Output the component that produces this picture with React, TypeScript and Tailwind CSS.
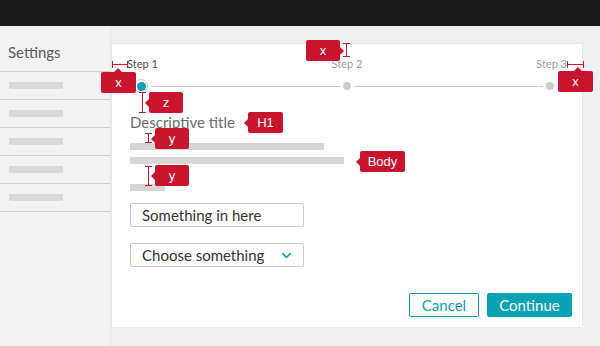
import { ChevronDown } from "lucide-react";

// red annotation tag with a little notch pointing at what it measures
function Tag({
  x,
  y,
  w,
  label,
  notch,
  at = 0,
}: {
  x: number;
  y: number;
  w: number;
  label: string;
  notch: "up" | "left" | "right";
  at?: number;
}) {
  return (
    <div
      className="absolute flex h-[21px] items-center justify-center rounded-[2px] bg-[#c8142c] text-[13px] text-white [font-family:'Liberation_Sans',sans-serif]"
      style={{ left: x, top: y, width: w }}
    >
      {notch === "up" && (
        <span
          className="absolute -top-[4px] h-0 w-0 border-x-[5px] border-b-[5px] border-x-transparent border-b-[#c8142c]"
          style={{ left: at - 5 }}
        />
      )}
      {notch === "left" && (
        <span className="absolute top-[6px] -left-[4px] h-0 w-0 border-y-[5px] border-r-[5px] border-y-transparent border-r-[#c8142c]" />
      )}
      {notch === "right" && (
        <span className="absolute top-[6px] -right-[4px] h-0 w-0 border-y-[5px] border-l-[5px] border-y-transparent border-l-[#c8142c]" />
      )}
      {label}
    </div>
  );
}

// measuring bar with end caps
function Beam({
  x,
  y,
  len,
  vertical,
}: {
  x: number;
  y: number;
  len: number;
  vertical?: boolean;
}) {
  if (vertical) {
    return (
      <div
        className="absolute flex w-[7px] flex-col items-center justify-between"
        style={{ left: x - 3, top: y, height: len }}
      >
        <span className="h-px w-[7px] bg-[#c8142c]" />
        <span className="w-px flex-1 bg-[#c8142c]" />
        <span className="h-px w-[7px] bg-[#c8142c]" />
      </div>
    );
  }
  return (
    <div
      className="absolute flex h-[7px] items-center justify-between"
      style={{ left: x, top: y - 3, width: len }}
    >
      <span className="h-[7px] w-px bg-[#c8142c]" />
      <span className="h-px flex-1 bg-[#c8142c]" />
      <span className="h-[7px] w-px bg-[#c8142c]" />
    </div>
  );
}

export default function App() {
  const rows = [0, 1, 2, 3, 4];

  return (
    <div className="relative flex h-[346px] w-[600px] flex-col overflow-hidden bg-[#f0f0f0] [font-family:Lato,'Open_Sans',sans-serif]">
      {/* top bar */}
      <div className="h-[26px] shrink-0 bg-[#1a1a1a]" />

      <div className="flex flex-1">
        {/* sidebar */}
        <aside className="w-[111px] shrink-0 border-r border-[#e6e6e6] bg-[#f2f2f2]">
          <div className="h-[46px] border-b border-[#d0d0d0] pt-[19px] pl-[8px] text-[15px] leading-none text-[#5a5a5a]">
            Settings
          </div>
          {rows.map((r) => (
            <div
              key={r}
              className="h-[28px] border-b border-[#d0d0d0] pt-[10px] pl-[9px]"
            >
              <div className="h-[7px] w-[54px] bg-[#d9d9d9]" />
            </div>
          ))}
        </aside>

        {/* content */}
        <main className="flex-1 pt-[17px] pr-[17px] pb-[18px]">
          <div className="flex h-full flex-col border border-[#e8e8e8] bg-white">
            {/* stepper */}
            <div className="flex justify-between px-[15px] pt-[14px] text-[11px] leading-none">
              <span className="text-[#4a4a4a]">Step 1</span>
              <span className="text-[#9a9a9a]">Step 2</span>
              <span className="text-[#9a9a9a]">Step 3</span>
            </div>
            <div className="mt-[10px] flex items-center pr-[28px] pl-[22px]">
              <div className="flex h-[14px] w-[14px] items-center justify-center rounded-full border border-[#cfcfcf]">
                <div className="h-[9px] w-[9px] rounded-full bg-[#07a2b3]" />
              </div>
              <div className="mx-[3px] h-px flex-1 bg-[#cccccc]" />
              <div className="h-[8px] w-[8px] rounded-full bg-[#cccccc]" />
              <div className="mx-[3px] h-px flex-1 bg-[#cccccc]" />
              <div className="h-[8px] w-[8px] rounded-full bg-[#cccccc]" />
            </div>

            {/* body */}
            <div className="flex flex-col pl-[18px]">
              <h1 className="mt-[22px] text-[15px] leading-none text-[#6a6a6a]">
                Descriptive title
              </h1>
              <div className="mt-[13px] h-[7px] w-[194px] bg-[#d6d6d6]" />
              <div className="mt-[7px] h-[7px] w-[214px] bg-[#d6d6d6]" />
              <div className="mt-[20px] h-[7px] w-[35px] bg-[#d6d6d6]" />

              <div className="mt-[12px] flex h-[24px] w-[174px] items-center rounded-[2px] border border-[#c8c8c8] pl-[11px] text-[15px] text-[#333333]">
                Something in here
              </div>
              <div className="mt-[16px] flex h-[24px] w-[174px] items-center justify-between rounded-[2px] border border-[#c8c8c8] pr-[9px] pl-[11px] text-[15px] text-[#333333]">
                Choose something
                <ChevronDown size={15} strokeWidth={2.5} className="text-[#07a2b3]" />
              </div>
            </div>

            {/* actions */}
            <div className="mt-auto flex justify-end gap-[8px] pr-[10px] pb-[10px]">
              <button className="h-[24px] w-[70px] rounded-[2px] border border-[#07a2b3] text-[15px] text-[#07a2b3]">
                Cancel
              </button>
              <button className="h-[24px] w-[85px] rounded-[2px] bg-[#07a2b3] text-[15px] text-white">
                Continue
              </button>
            </div>
          </div>
        </main>
      </div>

      {/* annotations */}
      <Beam x={112} y={64} len={16} />
      <Tag x={101} y={72} w={35} label="x" notch="up" at={17} />
      <Beam x={346} y={43} len={14} vertical />
      <Tag x={306} y={40} w={34} label="x" notch="right" />
      <Beam x={142} y={92} len={21} vertical />
      <Tag x={149} y={92} w={34} label="z" notch="left" />
      <Beam x={567} y={64} len={17} />
      <Tag x={558} y={71} w={35} label="x" notch="up" at={20} />
      <Tag x={248} y={112} w={35} label="H1" notch="left" />
      <Beam x={148} y={133} len={10} vertical />
      <Tag x={155} y={128} w={34} label="y" notch="left" />
      <Tag x={360} y={151} w={45} label="Body" notch="left" />
      <Beam x={148} y={166} len={20} vertical />
      <Tag x={155} y={165} w={34} label="y" notch="left" />
    </div>
  );
}
